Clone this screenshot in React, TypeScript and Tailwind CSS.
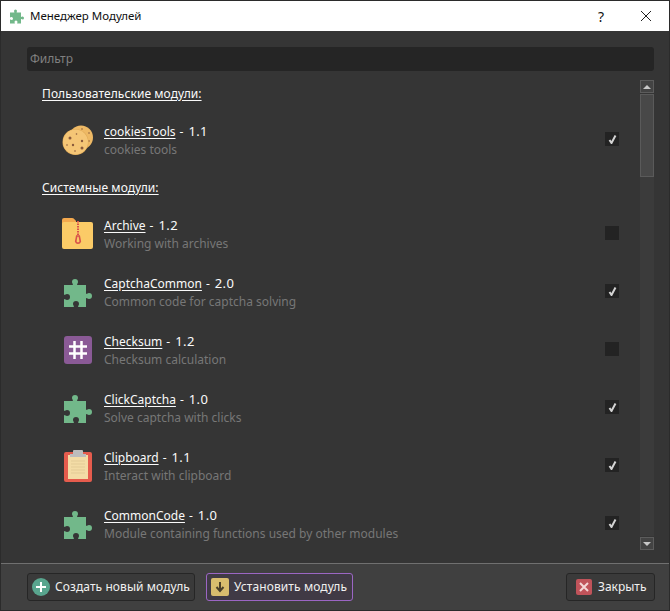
import React from "react";

const Puzzle = ({ size = 32 }: { size?: number }) => (
  <svg width={size} height={size} viewBox="0 0 32 32" className="shrink-0">
    <path
      fill="#72b88a"
      d="M2 9h8.200c.6 0 .9-.5.6-1C10.300 7.300 10 6.600 10 6a3 3 0 0 1 6 0c0 .6-.3 1.300-.8 2-.3.5 0 1 .6 1H24v8.200c0 .6.5.9 1 .6.700-.5 1.400-.8 2-.8a3 3 0 0 1 0 6c-.6 0-1.300-.3-2-.8-.5-.3-1 0-1 .6V31h-7.200c-.6 0-.9-.5-.6-1 .5-.7.800-1.400.800-2a3 3 0 0 0-6 0c0 .6.300 1.300.800 2 .3.500 0 1-.6 1H2v-7.200c0-.6.500-.9 1-.6.700.5 1.400.800 2 .800a3 3 0 0 0 0-6c-.6 0-1.300.3-2 .8-.5.300-1 0-1-.6V9z"
    />
  </svg>
);

const Cookie = () => (
  <svg width="32" height="32" viewBox="0 0 32 32" className="shrink-0">
    <circle cx="19" cy="13.500" r="12" fill="#eeb965" />
    <circle cx="20" cy="5" r=".8" fill="#8a5a3c" />
    <circle cx="27" cy="9" r=".8" fill="#8a5a3c" />
    <circle cx="27" cy="17" r=".8" fill="#8a5a3c" />
    <circle cx="13.500" cy="18" r="13" fill="#dfa957" />
    <circle cx="13.500" cy="18" r="12.500" fill="#f5c676" />
    <circle cx="8" cy="14" r="1.500" fill="#8a5a3c" />
    <circle cx="14.500" cy="10" r=".8" fill="#8a5a3c" />
    <circle cx="20" cy="17" r="1.200" fill="#8a5a3c" />
    <circle cx="11" cy="21" r="1.200" fill="#8a5a3c" />
    <circle cx="20" cy="24" r="1.500" fill="#8a5a3c" />
    <circle cx="5" cy="21" r=".8" fill="#8a5a3c" />
    <circle cx="13" cy="27" r=".8" fill="#8a5a3c" />
  </svg>
);

const Folder = () => (
  <svg width="32" height="32" viewBox="0 0 32 32" className="shrink-0">
    <path fill="#f4a94e" d="M0 2a2 2 0 0 1 2-2h8c2 0 3 2 4 3v4H0z" />
    <rect x="0" y="4" width="31" height="27" rx="2" fill="#fbcb67" />
    <path stroke="#d9534a" strokeWidth="2" strokeDasharray="1.500 1" d="M16 3v14" />
    <path fill="none" stroke="#d9534a" strokeWidth="1.600" d="M14.700 18h2.600l1 5.500a2.400 2.400 0 0 1-4.600 0z" />
  </svg>
);

const Hash = () => (
  <svg width="32" height="32" viewBox="0 0 32 32" className="shrink-0">
    <rect x="2" y="2" width="28" height="28" rx="3" fill="#8a5a96" />
    <path stroke="#fff" strokeWidth="2.500" d="M12.500 7v18M19.500 7v18M7 12.500h18M7 19.500h18" />
  </svg>
);

const Clipboard = () => (
  <svg width="32" height="32" viewBox="0 0 32 32" className="shrink-0">
    <rect x="2" y="2" width="28" height="30" rx="2" fill="#e55c4d" />
    <rect x="6" y="5" width="20" height="24" fill="#f3dca6" />
    <path stroke="#e3cb96" strokeWidth="1" d="M9 11h14M9 14h14M9 17h14M9 20h14M9 23h14" />
    <path fill="#bdbdbd" d="M11 1a1 1 0 0 1 1-1h8a1 1 0 0 1 1 1v3h3v3H8V4h3z" />
  </svg>
);

const Check = ({ on }: { on: boolean }) => (
  <div className="w-[14px] h-[14px] bg-[#232323] flex items-center justify-center shrink-0 mb-[2px]">
    {on && (
      <svg width="9" height="9" viewBox="0 0 9 9">
        <path d="M1.500 5 3.500 8 7.500 .5" fill="none" stroke="#d4d4d4" strokeWidth="2" />
      </svg>
    )}
  </div>
);

const Row = ({
  icon,
  name,
  version,
  desc,
  on,
}: {
  icon: React.ReactNode;
  name: string;
  version: string;
  desc: string;
  on: boolean;
}) => (
  <div className="h-[58px] flex items-center pl-[20px] pr-[21px] shrink-0">
    <div className="w-[32px] h-[32px]">{icon}</div>
    <div className="ml-[10px] flex-1 min-w-0 flex flex-col gap-[1px]">
      <div className="h-[17px] leading-[17px] text-[#fafafa] whitespace-nowrap flex items-center">
        <span className="underline underline-offset-2">{name}</span>
        <span className="ml-[4px]">-</span>
        <span className="ml-[5px] text-[13px] tracking-[0.4px]">{version}</span>
      </div>
      <div className="leading-[17px] text-[#777777] whitespace-nowrap">{desc}</div>
    </div>
    <Check on={on} />
  </div>
);

const Header = ({ children }: { children: React.ReactNode }) => (
  <div className="h-[26px] pt-[2px] flex items-center text-[#fafafa] tracking-[0.08px] shrink-0">
    <span className="underline underline-offset-2">{children}</span>
  </div>
);

const Scrollbar = () => (
  <div className="w-[14px] flex flex-col gap-[1px] shrink-0">
    <div className="h-[13px] bg-[#434343] border border-[#5c5c5c] flex items-center justify-center">
      <div className="w-0 h-0 border-l-[4px] border-r-[4px] border-b-[4px] border-l-transparent border-r-transparent border-b-[#c8c8c8]" />
    </div>
    <div className="flex-1 flex flex-col">
      <div className="h-[83px] bg-[#484848] border border-[#5a5a5a]" />
      <div className="flex-1 bg-[#3b3b3b]" />
    </div>
    <div className="h-[13px] bg-[#434343] border border-[#5c5c5c] flex items-center justify-center">
      <div className="w-0 h-0 border-l-[4px] border-r-[4px] border-t-[4px] border-l-transparent border-r-transparent border-t-[#c8c8c8]" />
    </div>
  </div>
);

export default function App() {
  return (
    <div className="w-[670px] h-[611px] flex flex-col bg-[#353535] border border-[#2b2b2b] font-['Noto_Sans',sans-serif] text-[12px] overflow-hidden">
      <div className="h-[30px] bg-white flex items-center shrink-0 pl-[8px] text-[#111111]">
        <Puzzle size={16} />
        <span className="ml-[5px] flex-1 text-[11.500px]">Менеджер Модулей</span>
        <span className="w-[10px] text-[14px] mr-[34px] text-center">?</span>
        <svg width="12" height="12" viewBox="0 0 12 12" className="mr-[17px]">
          <path d="M1 1l10 10M11 1 1 11" stroke="#222" strokeWidth="1" />
        </svg>
      </div>
      <div className="flex-1 min-h-0 flex flex-col pl-[26px] pr-[15px] pt-[16px] pb-[13px]">
        <div className="h-[24px] bg-[#252525] rounded-[3px] px-[3px] flex items-center text-[#808080] shrink-0">
          Фильтр
        </div>
        <div className="flex-1 min-h-0 flex mt-[9px]">
          <div className="flex-1 min-w-0 overflow-hidden pl-[15px] flex flex-col gap-[5px]">
            <Header>Пользовательские модули:</Header>
            <Row icon={<Cookie />} name="cookiesTools" version="1.1" desc="cookies tools" on />
            <Header>Системные модули:</Header>
            <div className="flex flex-col">
              <Row icon={<Folder />} name="Archive" version="1.2" desc="Working with archives" on={false} />
              <Row icon={<Puzzle />} name="CaptchaCommon" version="2.0" desc="Common code for captcha solving" on />
              <Row icon={<Hash />} name="Checksum" version="1.2" desc="Checksum calculation" on={false} />
              <Row icon={<Puzzle />} name="ClickCaptcha" version="1.0" desc="Solve captcha with clicks" on />
              <Row icon={<Clipboard />} name="Clipboard" version="1.1" desc="Interact with clipboard" on />
              <Row icon={<Puzzle />} name="CommonCode" version="1.0" desc="Module containing functions used by other modules" on />
            </div>
          </div>
          <Scrollbar />
        </div>
      </div>
      <div className="h-[47px] bg-[#404040] border-t border-[#707070] shrink-0 flex items-center pl-[26px] pr-[14px] text-[#f0f0f0] pb-[1px]">
        <button className="w-[168px] h-[28px] rounded-[3px] bg-[#3a3a3a] border border-[#262626] flex items-center pl-[4px]">
          <svg width="18" height="18" viewBox="0 0 18 18">
            <circle cx="9" cy="9" r="9" fill="#59a58e" />
            <path d="M9 4v10M4 9h10" stroke="#fff" strokeWidth="2" />
          </svg>
          <span className="ml-[5px] tracking-[0.08px]">Создать новый модуль</span>
        </button>
        <button className="ml-[11px] w-[147px] h-[28px] rounded-[3px] bg-[#403a45] border border-[#9b66c4] flex items-center pl-[4px]">
          <svg width="18" height="18" viewBox="0 0 18 18">
            <rect width="18" height="18" rx="2" fill="#d9bd6e" />
            <path d="M9 4v8M5.500 9 9 13l3.500-4" fill="none" stroke="#4a3f2a" strokeWidth="2" />
          </svg>
          <span className="ml-[5px] tracking-[0.1px]">Установить модуль</span>
        </button>
        <div className="flex-1" />
        <button className="w-[89px] h-[28px] rounded-[3px] bg-[#3a3a3a] border border-[#262626] flex items-center pl-[9px]">
          <svg width="16" height="16" viewBox="0 0 16 16">
            <rect width="16" height="16" rx="2" fill="#c0535a" />
            <path d="M4 4l8 8M12 4l-8 8" stroke="#f4d6d6" strokeWidth="2" />
          </svg>
          <span className="ml-[6px]">Закрыть</span>
        </button>
      </div>
    </div>
  );
}
